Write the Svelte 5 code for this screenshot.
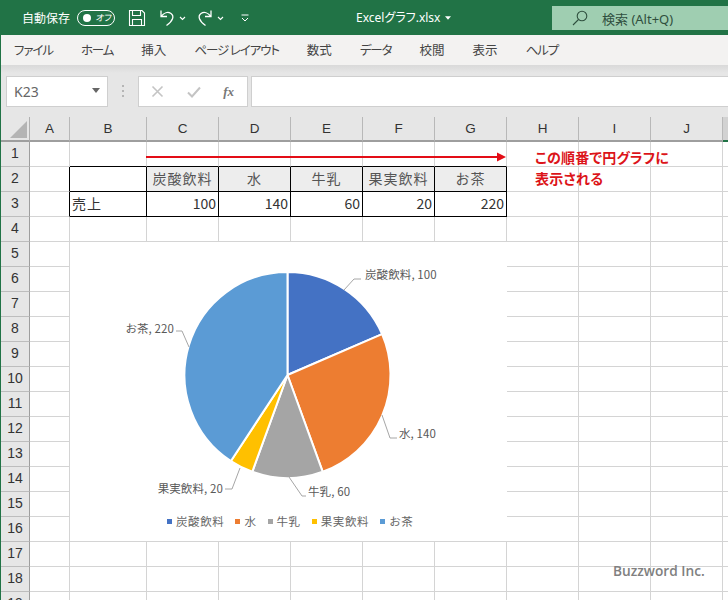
<script>
  const cols = [
    { n: 'A', w: 40 }, { n: 'B', w: 77 }, { n: 'C', w: 72 }, { n: 'D', w: 72 }, { n: 'E', w: 72 },
    { n: 'F', w: 72 }, { n: 'G', w: 72 }, { n: 'H', w: 72 }, { n: 'I', w: 72 }, { n: 'J', w: 72 }, { n: 'K', w: 72 }
  ];
  const rows = Array.from({ length: 19 }, (_, i) => i + 1);
  const menu = [
    { t: 'ファイル', kana: true }, { t: 'ホーム', kana: true }, { t: '挿入' },
    { t: 'ページ レイアウト', kana: true }, { t: '数式' }, { t: 'データ', kana: true },
    { t: '校閲' }, { t: '表示' }, { t: 'ヘルプ', kana: true }
  ];
  const data = {
    C2: '炭酸飲料', D2: '水', E2: '牛乳', F2: '果実飲料', G2: 'お茶',
    B3: '売上', C3: '100', D3: '140', E3: '60', F3: '20', G3: '220'
  };
  const tableCols = 'BCDEFG';

  function cellClass(c, r) {
    const inCol = tableCols.includes(c);
    const list = [];
    if (inCol && (r === 2 || r === 3)) list.push('bb', 'br');
    if (inCol && r === 1) list.push('bb');
    if (c === 'A' && (r === 2 || r === 3)) list.push('br');
    if (r === 2 && 'CDEFG'.includes(c)) list.push('head');
    if (r === 3 && 'CDEFG'.includes(c)) list.push('num');
    if (c === 'B' && r === 3) list.push('txt');
    return list.join(' ');
  }

  const slices = [
    { name: '炭酸飲料', v: 100, color: '#4472c4' },
    { name: '水', v: 140, color: '#ed7d31' },
    { name: '牛乳', v: 60, color: '#a5a5a5' },
    { name: '果実飲料', v: 20, color: '#ffc000' },
    { name: 'お茶', v: 220, color: '#5b9bd5' }
  ];
  const cx = 217.5, cy = 133, R = 103;
  const total = slices.reduce((s, x) => s + x.v, 0);
  let acc = 0;
  const paths = slices.map((s) => {
    const a0 = (acc / total) * 2 * Math.PI;
    acc += s.v;
    const a1 = (acc / total) * 2 * Math.PI;
    const p = (a) => `${(cx + R * Math.sin(a)).toFixed(2)} ${(cy - R * Math.cos(a)).toFixed(2)}`;
    const large = a1 - a0 > Math.PI ? 1 : 0;
    return { d: `M${cx} ${cy}L${p(a0)}A${R} ${R} 0 ${large} 1 ${p(a1)}Z`, color: s.color };
  });
  const leaders = [
    'M344 290 L354 279 L361 279',
    'M382 415 L390 438 L397 438',
    'M289 477 L302 496 L306 496',
    'M240 468 L232 489 L225 489',
    'M189 347 L182 331 L176 331'
  ];
  const labels = [
    { t: '炭酸飲料, 100', x: 365, y: 275, a: 'start' },
    { t: '水, 140', x: 399, y: 434, a: 'start' },
    { t: '牛乳, 60', x: 308, y: 492, a: 'start' },
    { t: '果実飲料, 20', x: 223, y: 489, a: 'end' },
    { t: 'お茶, 220', x: 174, y: 329, a: 'end' }
  ];
</script>

<div class="app">
  <header class="title">
    <span class="autosave">自動保存</span>
    <span class="toggle"><i></i><b>オフ</b></span>
    <div class="qat">
      <svg class="save" width="18" height="18" viewBox="0 0 18 18" fill="none" stroke="#fff" stroke-width="1.1">
        <path d="M1.5 1.5H14L16.5 4V16.5H1.5Z" />
        <path d="M4.5 1.5V6.5H12.5V1.5M4.5 16.5V10.5H13.5V16.5" />
      </svg>
      <svg width="16" height="18" viewBox="0 0 16 18" fill="none" stroke="#fff" stroke-width="1.3">
        <path d="M2 1.5V7.5H8M2 7.5C5 3.5 9 2.5 12 4.5C15.500 7 14 12 7.500 16.500" />
      </svg>
      <svg class="chev" width="7" height="5" viewBox="0 0 7 5" fill="none" stroke="#fff" stroke-width="1.1"><path d="M1 1L3.500 3.500L6 1" /></svg>
      <svg width="16" height="18" viewBox="0 0 16 18" fill="none" stroke="#fff" stroke-width="1.3">
        <path d="M14 1.500V7.500H8M14 7.500C11 3.500 7 2.500 4 4.500C0.500 7 2 12 8.500 16.500" />
      </svg>
      <svg class="chev" width="7" height="5" viewBox="0 0 7 5" fill="none" stroke="#fff" stroke-width="1.1"><path d="M1 1L3.500 3.500L6 1" /></svg>
      <svg class="more" width="8" height="8" viewBox="0 0 8 8" fill="none" stroke="#fff" stroke-width="1"><path d="M0.500 1H7.500" /><path d="M1 4L4 7L7 4" /></svg>
    </div>
    <span class="fname">Excelグラフ.xlsx<svg width="6" height="4" viewBox="0 0 7 4"><path d="M0 0H7L3.500 4Z" fill="#fff" /></svg></span>
    <div class="search">
      <svg width="16" height="16" viewBox="0 0 16 16" fill="none" stroke="#2f4f3e" stroke-width="1.1">
        <circle cx="10" cy="6" r="4.800" /><path d="M6.500 9.500L1 15" />
      </svg>
      <span>検索 (Alt+Q)</span>
    </div>
  </header>

  <nav class="ribbon">
    {#each menu as m}<span class:kana={m.kana}>{m.t}</span>{/each}
  </nav>

  <div class="fbar">
    <div class="namebox"><span>K23</span><svg width="8" height="5" viewBox="0 0 8 5"><path d="M0 0H8L4 5Z" fill="#666" /></svg></div>
    <div class="grip"><i></i><i></i><i></i></div>
    <div class="fbtns">
      <svg width="13" height="13" viewBox="0 0 13 13" stroke="#c4c4c4" stroke-width="1.600" fill="none"><path d="M1.500 1.500L11.500 11.500M11.500 1.500L1.500 11.500" /></svg>
      <svg width="14" height="12" viewBox="0 0 14 12" stroke="#c4c4c4" stroke-width="2" fill="none"><path d="M1 6.500L5 10.500L13 1.500" /></svg>
      <span class="fx">fx</span>
    </div>
    <div class="finput"></div>
  </div>

  <div class="sheet">
    <div class="grid">
      <div class="corner"><svg width="17" height="17" viewBox="0 0 17 17"><path d="M17 0V17H0Z" fill="#b4b4b4" /></svg></div>
      {#each cols as c}
        <div class="colh" class:sel={c.n === 'K'}>{c.n === 'K' ? '' : c.n}</div>
      {/each}
      {#each rows as r}
        <div class="rowh">{r}</div>
        {#each cols as c}
          <div class="cell {cellClass(c.n, r)}">{data[c.n + r] ?? ''}</div>
        {/each}
      {/each}
    </div>

    <svg class="arrow" width="362" height="12" viewBox="0 0 362 12">
      <path d="M0 6H352" stroke="#e30d16" stroke-width="2" />
      <path d="M351 1.500L360 6L351 10.500Z" fill="#e30d16" />
    </svg>
    <div class="note">この順番で円グラフに<br />表示される</div>

    <div class="chart">
      <svg class="pie" width="437" height="299" viewBox="0 0 437 299">
        {#each paths as p}
          <path d={p.d} fill={p.color} stroke="#fff" stroke-width="2" stroke-linejoin="round" />
        {/each}
      </svg>
      <div class="legend">
        {#each slices as s}
          <span class="li"><i style="background:{s.color}"></i>{s.name}</span>
        {/each}
      </div>
    </div>
    <svg class="labels" width="728" height="600" viewBox="0 117 728 600">
      {#each leaders as d}<path {d} fill="none" stroke="#a6a6a6" stroke-width="1" />{/each}
      {#each labels as l}
        <text x={l.x} y={l.y + 4} text-anchor={l.a}>{l.t}</text>
      {/each}
    </svg>
    <div class="mark">Buzzword Inc.</div>
  </div>
</div>

<style>
  :global(body) {
    margin: 0;
    background: #fff;
  }
  .app {
    width: 728px;
    height: 600px;
    overflow: hidden;
    display: flex;
    flex-direction: column;
    font-family: "Noto Sans CJK JP", "Noto Sans", sans-serif;
    color: #444;
    border-left: 1px solid #217346;
    box-sizing: border-box;
  }
  .title {
    height: 35px;
    flex: none;
    margin-left: -1px;
    background: #217346;
    color: #fff;
    display: flex;
    align-items: center;
    position: relative;
    font-size: 12px;
  }
  .autosave { margin-left: 22px; width: 55px; }
  .toggle {
    width: 36px;
    height: 14px;
    border: 1px solid #fff;
    border-radius: 9px;
    display: flex;
    align-items: center;
    box-sizing: content-box;
  }
  .toggle i { width: 8px; height: 8px; border-radius: 50%; background: #fff; margin-left: 5px; flex: none; }
  .toggle b {
    font-weight: 400;
    font-size: 9px;
    margin-left: 5px;
    line-height: 1;
    white-space: nowrap;
    font-feature-settings: "palt";
    transform: skewX(-8deg);
  }
  .qat { display: flex; align-items: center; margin-left: 13px; }
  .qat .save { margin-right: 13px; }
  .qat .chev { margin: 1px 11px 0 4px; }
  .qat .more { margin-left: 6px; }
  .fname {
    position: absolute;
    left: 356px;
    top: 9px;
    line-height: 17px;
    display: flex;
    align-items: center;
    gap: 5px;
    font-size: 12px;
    font-family: "Noto Sans", "Noto Sans CJK JP", sans-serif;
    font-feature-settings: "palt";
  }
  .search {
    position: absolute;
    left: 552px;
    top: 6px;
    width: 176px;
    height: 24px;
    background: #9fceb1;
    color: #2f4f3e;
    display: flex;
    align-items: center;
    font-size: 13px;
  }
  .search svg { margin-left: 20px; }
  .search span { margin-left: 14px; font-family: "Noto Sans", "Noto Sans CJK JP", sans-serif; }
  .ribbon {
    height: 30px;
    flex: none;
    background: #f3f2f1;
    display: flex;
    align-items: center;
    font-size: 12.5px;
    color: #444;
    padding: 0 0 2px 13px;
    box-sizing: border-box;
    gap: 28px;
    font-feature-settings: "palt";
  }
  .ribbon .kana { letter-spacing: -1.1px; }
  .fbar {
    flex: none;
    height: 52px;
    background: linear-gradient(#d9d9d9 0, #e6e6e6 8px, #e6e6e6 100%);
    display: flex;
    align-items: flex-start;
    padding-top: 11px;
    box-sizing: border-box;
  }
  .namebox {
    width: 102px;
    height: 31px;
    margin-left: 5px;
    background: #fff;
    border: 1px solid #cfcfcf;
    box-sizing: border-box;
    display: flex;
    align-items: center;
    justify-content: space-between;
    padding: 0 7px 0 7px;
    font-size: 14px;
    color: #666;
    font-family: "Noto Sans", sans-serif;
  }
  .namebox svg { margin-top: -3px; }
  .grip {
    width: 30px;
    display: flex;
    flex-direction: column;
    align-items: center;
    gap: 3px;
    padding-top: 9px;
  }
  .grip i { width: 2px; height: 2px; background: #b5b5b5; display: block; }
  .fbtns {
    width: 110px;
    height: 31px;
    background: #fff;
    border: 1px solid #cfcfcf;
    box-sizing: border-box;
    display: flex;
    align-items: center;
    justify-content: space-between;
    padding: 0 13px 0 12px;
  }
  .fx {
    font-family: "Liberation Serif", serif;
    font-style: italic;
    font-weight: 700;
    font-size: 13px;
    color: #777;
  }
  .finput {
    flex: 1;
    height: 31px;
    margin-left: 3px;
    background: #fff;
    border: 1px solid #cfcfcf;
    border-right: 0;
    box-sizing: border-box;
  }
  .sheet { position: relative; flex: 1; overflow: hidden; }
  .grid {
    display: grid;
    grid-template-columns: 29px 40px 77px repeat(9, 72px);
    grid-template-rows: 25px;
    grid-auto-rows: 25px;
    font-size: 14px;
    color: #333;
  }
  .corner, .colh, .rowh {
    background: #e6e6e6;
    box-sizing: border-box;
  }
  .corner {
    border-right: 1px solid #b0b0b0;
    border-bottom: 2px solid #9e9e9e;
    display: flex;
    align-items: flex-end;
    justify-content: flex-end;
    padding: 0 2px 2px 0;
  }
  .colh {
    border-right: 1px solid #b8b8b8;
    border-bottom: 2px solid #9e9e9e;
    text-align: center;
    line-height: 23px;
    font-family: "Liberation Sans", sans-serif;
    font-size: 13.5px;
  }
  .colh.sel {
    background: #d2d2d2;
    border-bottom-color: #217346;
  }
  .rowh {
    border-right: 1px solid #9e9e9e;
    border-bottom: 1px solid #bdbdbd;
    text-align: center;
    line-height: 23px;
    font-family: "Liberation Sans", sans-serif;
    font-size: 14px;
  }
  .cell {
    box-sizing: border-box;
    border-right: 1px solid #d4d4d4;
    border-bottom: 1px solid #d4d4d4;
    line-height: 23px;
    padding: 0 2px;
    white-space: nowrap;
    overflow: hidden;
    font-size: 14px;
  }
  .bb { border-bottom-color: #000; }
  .br { border-right-color: #000; }
  .head { background: #ededed; text-align: center; color: #555; padding: 0; letter-spacing: 1px; }
  .num { text-align: right; padding-right: 2px; }
  .txt { padding-left: 2px; letter-spacing: 1px; }
  .arrow { position: absolute; left: 145px; top: 34px; }
  .note {
    position: absolute;
    left: 534px;
    top: 30px;
    font-size: 14px;
    font-weight: 700;
    line-height: 21px;
    color: #dc1419;
    letter-spacing: 0.2px;
    font-feature-settings: "palt";
    white-space: nowrap;
  }
  .chart {
    position: absolute;
    left: 69px;
    top: 125px;
    width: 437px;
    height: 299px;
    background: #fff;
  }
  .pie { display: block; }
  .legend {
    position: absolute;
    left: 97px;
    top: 271px;
    display: flex;
    gap: 11px;
    font-size: 11.5px;
    line-height: 16px;
    color: #666;
    letter-spacing: 0.6px;
    white-space: nowrap;
  }
  .li { display: flex; align-items: center; }
  .li i { width: 5px; height: 5px; margin-right: 4px; display: block; }
  .labels { position: absolute; left: -1px; top: 0; }
  .labels text {
    font-family: "Noto Sans CJK JP", "Noto Sans", sans-serif;
    font-size: 11.5px;
    letter-spacing: 0.1px;
    fill: #595959;
  }
  .mark {
    position: absolute;
    left: 612px;
    top: 444px;
    font-family: "Open Sans", "Noto Sans", sans-serif;
    font-size: 13.7px;
    font-weight: 600;
    color: #808080;
    white-space: nowrap;
  }
</style>
